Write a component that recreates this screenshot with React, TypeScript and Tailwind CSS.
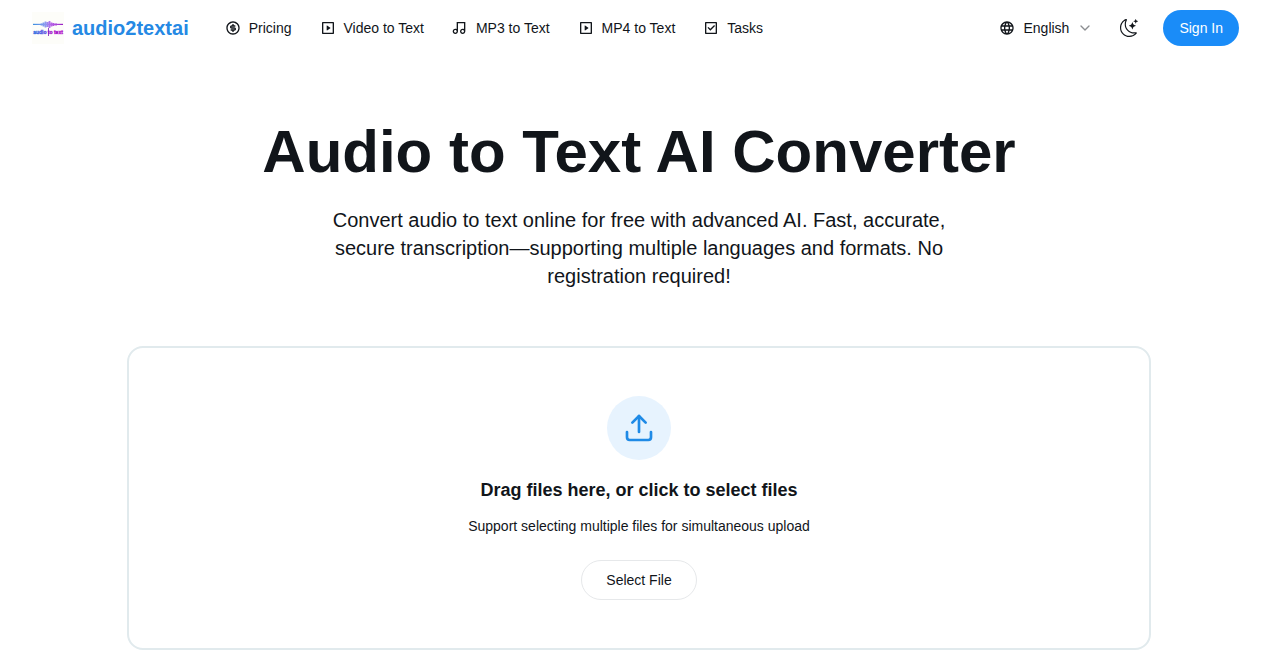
import { useRef, useState } from 'react';
import { ChevronDown, Upload } from 'lucide-react';
import { RiCheckboxLine, RiMoneyDollarCircleLine, RiMusic2Line, RiVideoLine } from 'react-icons/ri';
import { BsMoonStars } from 'react-icons/bs';
import { MdLanguage } from 'react-icons/md';

const navItems = [
    { label: 'Pricing', href: '#pricing', icon: RiMoneyDollarCircleLine },
    { label: 'Video to Text', href: '#video-to-text', icon: RiVideoLine },
    { label: 'MP3 to Text', href: '#mp3-to-text', icon: RiMusic2Line },
    { label: 'MP4 to Text', href: '#mp4-to-text', icon: RiVideoLine },
    { label: 'Tasks', href: '#tasks', icon: RiCheckboxLine },
];

function Logo() {
    return (
        <svg viewBox="0 0 32 32" className="size-8 shrink-0" aria-hidden="true">
            <defs>
                <linearGradient id="wave" gradientUnits="userSpaceOnUse" x1="1" y1="0" x2="31" y2="0">
                    <stop offset="0" stopColor="#3b8fe0" />
                    <stop offset="0.4" stopColor="#8a9cf0" />
                    <stop offset="0.6" stopColor="#b765e8" />
                    <stop offset="1" stopColor="#9a1fc4" />
                </linearGradient>
                <linearGradient id="caption" gradientUnits="userSpaceOnUse" x1="1" y1="0" x2="31" y2="0">
                    <stop offset="0" stopColor="#2a6fe0" />
                    <stop offset="0.45" stopColor="#5a3fe0" />
                    <stop offset="0.55" stopColor="#9a12c8" />
                    <stop offset="1" stopColor="#b010c8" />
                </linearGradient>
            </defs>
            <rect width="32" height="32" fill="#fdfdf9" />
            <path d="M1 12.400H31" stroke="url(#wave)" strokeWidth="1.2" />
            <path
                d="M7 12v1M9.500 11.500v2M11.500 10.500v4M13.500 9.500v6M15.500 10v5M17.500 9v7M19.500 10.500v4M21.500 11v3M24 11.500v2M26 12v1"
                stroke="url(#wave)"
                strokeWidth="1.8"
            />
            <path d="M16.500 16v8" stroke="#7a18b8" strokeWidth="0.8" />
            <text
                x="16"
                y="22"
                textAnchor="middle"
                fill="url(#caption)"
                stroke="url(#caption)"
                strokeWidth="0.3"
                className="font-['Liberation_Sans'] text-[5px] font-bold"
            >
                audio to text
            </text>
        </svg>
    );
}

function Header() {
    return (
        <header className="flex h-14 items-center justify-between pr-[39px] pl-8 text-sm">
            <div className="flex items-center gap-6">
                <a href="#home" className="flex items-center gap-2">
                    <Logo />
                    <span className="text-xl font-bold text-[#2589e4]">audio2textai</span>
                </a>
                <nav className="flex items-center gap-1">
                    {navItems.map(({ label, href, icon: Icon }) => (
                        <a key={label} href={href} className="flex items-center gap-2 px-3 py-2 whitespace-nowrap">
                            <Icon className="size-4" />
                            {label}
                        </a>
                    ))}
                </nav>
            </div>

            <div className="flex items-center">
                <button type="button" className="mr-1.5 flex items-center gap-2 px-3 py-2">
                    <MdLanguage className="size-4" />
                    English
                    <ChevronDown className="size-4 text-[#8b8d90]" />
                </button>
                <button type="button" aria-label="Toggle theme" className="flex size-9 items-center justify-center">
                    <BsMoonStars className="size-[18px]" />
                </button>
                <button type="button" className="ml-4 h-9 rounded-full bg-[#1a8cf8] px-4 text-white">
                    Sign In
                </button>
            </div>
        </header>
    );
}

function UploadCard() {
    const inputRef = useRef<HTMLInputElement>(null);
    const [files, setFiles] = useState<string[]>([]);

    const addFiles = (list: FileList | null) => {
        setFiles(Array.from(list ?? []).map((file) => file.name));
    };

    return (
        <section
            className="mx-auto mt-14 flex w-full max-w-5xl flex-col items-center rounded-2xl border-2 border-[#e1eaed] p-12 text-center"
            onDragOver={(e) => e.preventDefault()}
            onDrop={(e) => {
                e.preventDefault();
                addFiles(e.dataTransfer.files);
            }}
        >
            <div className="flex size-16 items-center justify-center rounded-full bg-[#e7f3fe]">
                <Upload className="size-8 text-[#1f8ae6]" />
            </div>
            <h2 className="mt-4 text-lg leading-7 font-bold">Drag files here, or click to select files</h2>
            <p className="mt-3 text-sm">Support selecting multiple files for simultaneous upload</p>
            <input
                ref={inputRef}
                type="file"
                multiple
                aria-label="Select files"
                className="hidden"
                onChange={(e) => addFiles(e.target.files)}
            />
            <button
                type="button"
                className="mt-6 h-10 rounded-full border border-[#e6e8ea] px-6 text-sm"
                onClick={() => inputRef.current?.click()}
            >
                Select File
            </button>
            {files.length > 0 && <p className="mt-4 text-sm">{files.join(', ')}</p>}
        </section>
    );
}

export default function App() {
    return (
        <div className="bg-white font-['Liberation_Sans',Arial,sans-serif] text-[#11151a]">
            <Header />
            <main className="px-8 pt-[66px]">
                <div className="text-center">
                    <h1 className="text-6xl leading-[60px] font-bold">Audio to Text AI Converter</h1>
                    <p className="mx-auto mt-6 max-w-2xl px-4 text-xl leading-7">
                        Convert audio to text online for free with advanced AI. Fast, accurate, secure
                        transcription—supporting multiple languages and formats. No registration required!
                    </p>
                </div>
                <UploadCard />
            </main>
        </div>
    );
}
